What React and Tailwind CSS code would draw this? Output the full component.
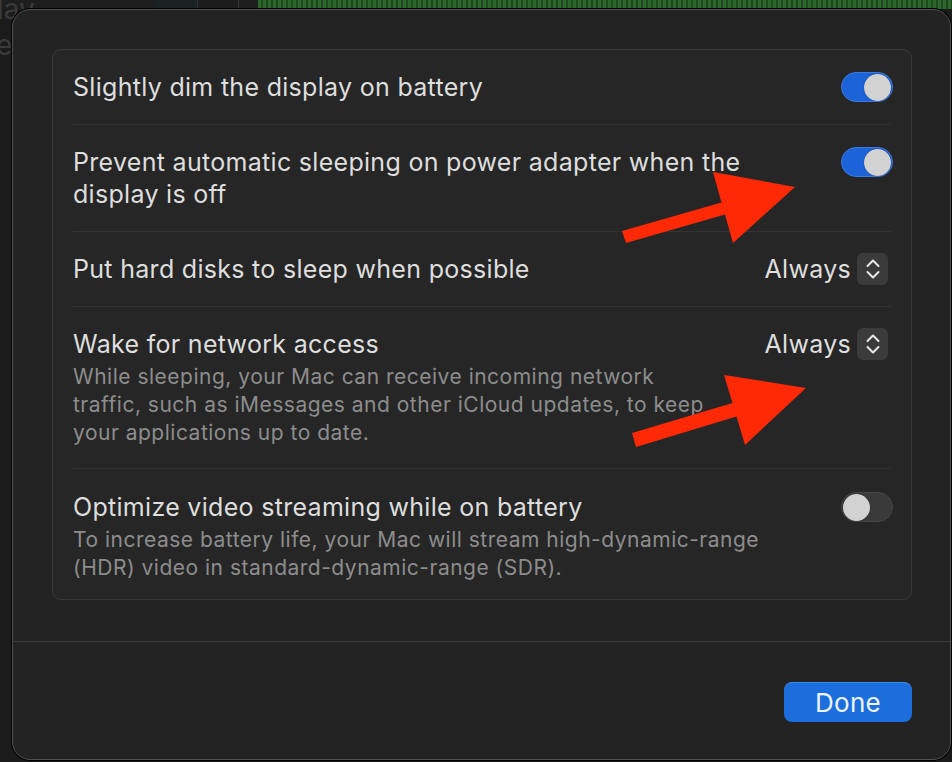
import React from "react";

// macOS-style "Energy" options sheet with red annotation arrows

const Toggle = ({ on }) => (
  <div
    className={
      "mr-[-2px] mt-[1px] flex h-[30px] w-[52px] shrink-0 items-center rounded-full border px-[1px] " +
      (on ? "justify-end border-[#3b7be3] bg-[#1c62d8]" : "justify-start border-[#474747] bg-[#3a3a3a]")
    }
  >
    <div className="h-[27px] w-[27px] rounded-full bg-[#d2d2d2] shadow-[0_0_1px_rgba(0,0,0,0.6)]" />
  </div>
);

const Stepper = ({ value }) => (
  <div className="mr-[3px] flex shrink-0 items-center gap-[6px]">
    <span className="text-[25px] leading-[32px] tracking-[0.3px] text-[#dedede]">{value}</span>
    <div className="flex h-[32px] w-[31px] items-center justify-center rounded-[6px] bg-[#3b3b3b]">
      <svg width="16" height="24" viewBox="0 0 16 24" fill="none">
        <polyline points="2.5,9 8,3.5 13.5,9" stroke="#e8e8e8" strokeWidth="2" strokeLinecap="round" strokeLinejoin="round" />
        <polyline points="2.5,15 8,20.5 13.5,15" stroke="#e8e8e8" strokeWidth="2" strokeLinecap="round" strokeLinejoin="round" />
      </svg>
    </div>
  </div>
);

const Row = ({ title, desc, control, last, pad = "py-[21px]" }) => (
  <div className={"flex items-start justify-between gap-4 " + pad + (last ? "" : " border-b border-[#333333]")}>
    <div className="flex flex-col">
      <div className="text-[25px] leading-[32px] tracking-[0.3px] text-[#dedede]">{title}</div>
      {desc && (
        <div className="mt-[3px] text-[21px] leading-[28px] tracking-[0.5px] text-[#8d8d8d]">{desc}</div>
      )}
    </div>
    {control}
  </div>
);

export default function App() {
  return (
    <div className="relative h-[762px] w-[952px] overflow-hidden bg-[#1b1b1b] font-['Inter','Liberation_Sans',sans-serif]">
      {/* desktop behind the sheet */}
      <div className="absolute left-0 right-0 top-0 flex h-[9px]">
        <div className="w-[155px] bg-[#1e1e1e]" />
        <div className="w-[42px] bg-[#1a2121]" />
        <div className="w-[1px] bg-[#333333]" />
        <div className="w-[40px] bg-[#1c1c1c]" />
        <div className="w-[1px] bg-[#333333]" />
        <div className="w-[19px] bg-[#1e1e1e]" />
        <div className="flex-1 bg-[repeating-linear-gradient(90deg,#2c672c_0px,#2c672c_3px,#1e481e_3px,#1e481e_5px)]" />
      </div>
      <div className="absolute left-[-3px] top-[-12px] text-[28px] text-[#3a3a3a]">lay</div>
      <div className="absolute left-[-4px] top-[24px] text-[28px] text-[#3a3a3a]">e</div>

      <div className="relative pl-[12px] pt-[9px]">
        <div className="flex h-[751px] w-[939px] flex-col rounded-[18px] border border-[#505050] bg-[#232323] shadow-[0_0_0_1px_#000]">
          <div className="px-[39px] pb-[41px] pt-[39px]">
            <div className="w-[860px] rounded-[9px] border border-[#393939] bg-[#262626] px-[20px]">
              <Row title="Slightly dim the display on battery" control={<Toggle on />} />
              <Row
                title={<>Prevent automatic sleeping on power adapter when the<br />display is off</>}
                control={<Toggle on />}
              />
              <Row title="Put hard disks to sleep when possible" control={<Stepper value="Always" />} />
              <Row
                title="Wake for network access"
                desc={<>While sleeping, your Mac can receive incoming network<br />traffic, such as iMessages and other iCloud updates, to keep<br />your applications up to date.</>}
                control={<Stepper value="Always" />}
              />
              <Row
                title="Optimize video streaming while on battery"
                desc={<>To increase battery life, your Mac will stream high-dynamic-range<br />(HDR) video in standard-dynamic-range (SDR).</>}
                control={<Toggle />}
                pad="pt-[22px] pb-[17px]"
                last
              />
            </div>
          </div>
          <div className="flex flex-1 justify-end border-t border-[#393939] pr-[38px] pt-[40px]">
            <button className="h-[40px] w-[128px] rounded-[8px] border-t border-[#3a8af0] bg-[#1b6edb] pb-[2px] text-[26px] tracking-[0.3px] text-[#eef3fb]">
              Done
            </button>
          </div>
        </div>
      </div>

      {/* annotation arrows */}
      <svg className="pointer-events-none absolute left-0 top-0" width="952" height="762">
        <polygon points="622,231 721.5,202.5 713,172 795,187 733,243 725,214.5 626,243" fill="#ff2a05" />
        <polygon points="632,433 732.5,403 724,375 806,388 745,445 736.5,416.5 636,447" fill="#ff2a05" />
      </svg>
    </div>
  );
}
